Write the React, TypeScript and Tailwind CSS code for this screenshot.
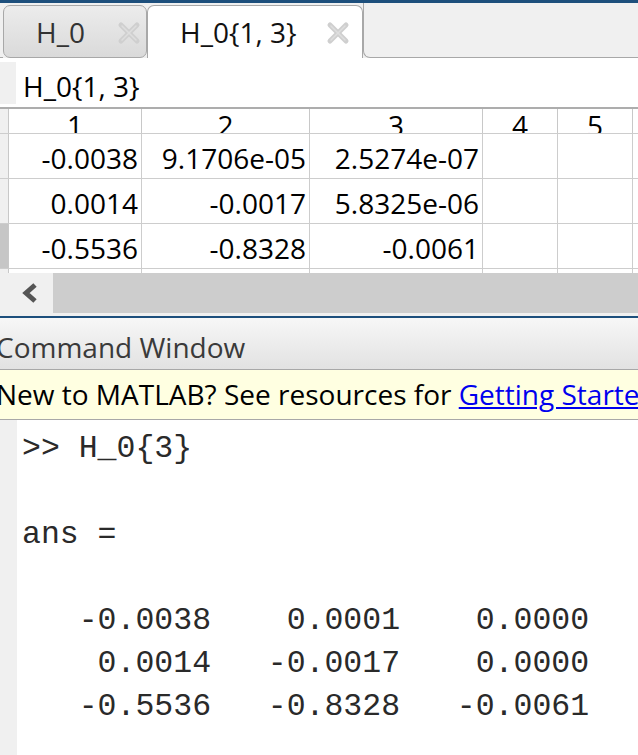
import React from "react";

const CloseX = () => (
  <svg width="24" height="24" viewBox="0 0 24 24" className="shrink-0">
    <g strokeLinecap="round">
      <line x1="4" y1="4" x2="20" y2="20" stroke="#cfcfcf" strokeWidth="5" />
      <line x1="20" y1="4" x2="4" y2="20" stroke="#cfcfcf" strokeWidth="5" />
      <line x1="5" y1="5" x2="19" y2="19" stroke="#dedede" strokeWidth="1.5" />
      <line x1="19" y1="5" x2="5" y2="19" stroke="#dedede" strokeWidth="1.5" />
    </g>
  </svg>
);

const cols = [
  { w: "w-[133px]", label: "1" },
  { w: "w-[168px]", label: "2" },
  { w: "w-[173px]", label: "3" },
  { w: "w-[75px]", label: "4" },
  { w: "w-[75px]", label: "5" },
];

const rows = [
  ["-0.0038", "9.1706e-05", "2.5274e-07", "", ""],
  ["0.0014", "-0.0017", "5.8325e-06", "", ""],
  ["-0.5536", "-0.8328", "-0.0061", "", ""],
];

export default function App() {
  const ui = { fontFamily: '"Open Sans", "Noto Sans", sans-serif' };
  const mono = { fontFamily: '"Liberation Mono", "DejaVu Sans Mono", monospace' };
  return (
    <div className="w-[638px] h-[755px] overflow-hidden bg-white flex flex-col text-[28px] text-black" style={ui}>
      {/* top blue line */}
      <div className="h-[3px] bg-[#1d4f7c] shrink-0" />

      {/* tab strip */}
      <div className="h-[55px] flex shrink-0 bg-[#f0f0f0]">
        <div className="w-[3px] border-b border-[#a8a8a8]" />
        <div className="mt-[2px] w-[144px] rounded-[7px] border border-[#a8a8a8] bg-gradient-to-b from-[#ececec] to-[#dadada] flex items-center pl-[32px] text-[#333]">
          <span className="leading-[38px]">H_0</span>
          <span className="ml-[32px] mt-[2px]"><CloseX /></span>
        </div>
        <div className="mt-[2px] w-[216px] rounded-t-[7px] border-t border-x border-[#a8a8a8] bg-white flex items-center pl-[32px] text-[#111]">
          <span className="leading-[38px] whitespace-nowrap">H_0{"{"}1, 3{"}"}</span>
          <span className="ml-[30px] mt-[2px]"><CloseX /></span>
        </div>
        <div className="flex-1 border-l border-b border-[#a8a8a8] rounded-bl-[7px]" />
      </div>

      {/* variable name field */}
      <div className="h-[49px] flex shrink-0">
        <div className="w-[16px] mt-[4px] h-[42px] bg-[#f0f0f0]" />
        <div className="pl-[7px] pt-[9px] leading-[38px] whitespace-nowrap">H_0{"{"}1, 3{"}"}</div>
      </div>

      {/* grid */}
      <div className="shrink-0 border-t-2 border-[#adadad]">
        {/* header row */}
        <div className="h-[24px] flex overflow-hidden">
          <div className="w-[9px] shrink-0 bg-[#f0f0f0] border-r border-[#c8c8c8]" />
          {cols.map((c) => (
            <div key={c.label} className={`${c.w} shrink-0 border-r border-[#c8c8c8] text-center leading-[33px] h-[24px] overflow-hidden`}>
              {c.label}
            </div>
          ))}
          <div className="flex-1" />
        </div>
        {/* data rows */}
        {rows.map((r, i) => (
          <div key={i} className="h-[45px] flex border-t border-[#cdcdcd]">
            <div className={`w-[9px] shrink-0 border-r border-[#c8c8c8] ${i === 2 ? "bg-[#c6c6c6]" : "bg-[#f0f0f0]"}`} />
            {cols.map((c, j) => (
              <div key={j} className={`${c.w} shrink-0 border-r border-[#cdcdcd] flex items-center justify-end pr-[3px] pt-[3px] leading-[38px] whitespace-nowrap`}>
                {r[j]}
              </div>
            ))}
            <div className="flex-1" />
          </div>
        ))}
        {/* partial row */}
        <div className="h-[5px] flex border-t border-[#cdcdcd]">
          <div className="w-[9px] shrink-0 bg-[#f0f0f0] border-r border-[#c8c8c8]" />
          {cols.map((c, j) => (
            <div key={j} className={`${c.w} shrink-0 border-r border-[#cdcdcd]`} />
          ))}
        </div>
      </div>

      {/* horizontal scrollbar */}
      <div className="h-[40px] flex shrink-0">
        <div className="w-[53px] bg-[#f0f0f0] flex items-center pl-[21px]">
          <svg width="18" height="20" viewBox="0 0 18 20">
            <polyline points="14,2 5,10 14,18" fill="none" stroke="#555" strokeWidth="5" strokeLinejoin="miter" />
          </svg>
        </div>
        <div className="flex-1 bg-[#cdcdcd]" />
      </div>

      <div className="h-[3px] bg-[#f0f0f0] shrink-0" />
      <div className="h-[2px] bg-[#1d4f7c] shrink-0" />

      {/* command window header */}
      <div className="h-[52px] shrink-0 bg-gradient-to-b from-[#f7f7f7] to-[#e2e2e2] border-b border-[#a8a8a8] pt-[10px] text-[#3a3a3a] overflow-hidden">
        <div className="-ml-[4px] leading-[38px] whitespace-nowrap">Command Window</div>
      </div>

      {/* banner */}
      <div className="h-[50px] shrink-0 bg-[#ffffe1] border-b border-[#a8a8a8] pt-[5px] overflow-hidden">
        <div className="-ml-[4px] leading-[38px] whitespace-nowrap">
          New to MATLAB? See resources for{" "}
          <span className="text-[#0000ee] underline">Getting Started</span>
          <span>.</span>
        </div>
      </div>

      {/* command area */}
      <div className="flex-1 flex">
        <div className="w-[17px] shrink-0 bg-[#f0f0f0]" />
        <pre className="pl-[5px] pt-[7px] text-[31.5px] leading-[43px] text-[#2a2a2a] m-0" style={mono}>
{`>> H_0{3}

ans =

   -0.0038    0.0001    0.0000
    0.0014   -0.0017    0.0000
   -0.5536   -0.8328   -0.0061
`}
        </pre>
      </div>
    </div>
  );
}
